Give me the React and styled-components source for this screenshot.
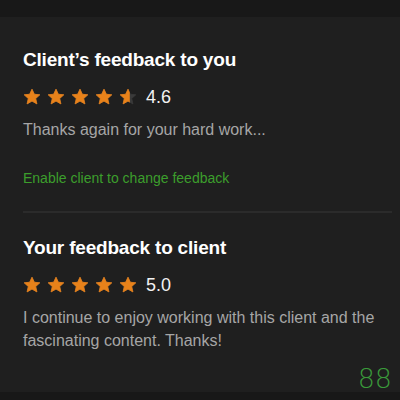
import React from 'react';
import styled, { createGlobalStyle } from 'styled-components';

const GlobalStyle = createGlobalStyle`
  html, body {
    margin: 0;
    padding: 0;
    background: #181818;
  }
  body {
    font-family: "Liberation Sans", Arial, sans-serif;
    -webkit-font-smoothing: antialiased;
  }
`;

const Page = styled.div`
  width: 400px;
  height: 400px;
  overflow: hidden;
  background: #181818;
  display: flex;
  flex-direction: column;
`;

const Panel = styled.div`
  margin-top: 17px;
  height: 375px;
  background: #1f1f1f;
  padding: 30px 0 0 23px;
  box-sizing: border-box;
  position: relative;
`;

const Section = styled.section`
  padding-right: 20px;
`;

const Title = styled.h2`
  margin: 0;
  color: #ffffff;
  font-size: 19px;
  font-weight: 700;
  line-height: 26px;
  letter-spacing: -0.2px;
`;

const RatingRow = styled.div`
  display: flex;
  align-items: center;
  margin-top: 12px;
  height: 24px;
`;

const Stars = styled.div`
  display: flex;
  gap: 6px;
`;

const Score = styled.span`
  margin-left: 9px;
  color: #f2f2f2;
  font-size: 18px;
  line-height: 24px;
`;

const Comment = styled.p`
  margin: 9px 0 0;
  color: #a6a6a6;
  font-size: 16px;
  line-height: 23px;
  max-width: 365px;
`;

const ActionLink = styled.a`
  display: block;
  margin-top: 28px;
  color: #3c9e2c;
  font-size: 14px;
  line-height: 18px;
  text-decoration: none;
  cursor: pointer;
`;

const Divider = styled.hr`
  border: 0;
  height: 2px;
  background: #2b2b2b;
  margin: 24px 8px 22px 0;
`;

const Counter = styled.span`
  position: absolute;
  right: 8px;
  bottom: -2px;
  color: #3a9a3a;
  font-family: "DejaVu Sans", sans-serif;
  font-weight: 300;
  font-size: 27px;
  line-height: 30px;
`;

const STAR = 'M9 1.2l2.35 5.05 5.45.55-4.1 3.7 1.2 5.4L9 13.1l-4.9 2.8 1.2-5.4-4.1-3.7 5.45-.55z';

function Star({ fill = 1, id }) {
  return (
    <svg width="18" height="18" viewBox="0 0 18 18">
      <defs>
        <clipPath id={id}>
          <rect x="0" y="0" width={18 * fill} height="18" />
        </clipPath>
      </defs>
      <path d={STAR} fill="#3a3a3a" stroke="#3a3a3a" strokeWidth="0.8" strokeLinejoin="round" />
      <path d={STAR} fill="#e8821a" stroke="#e8821a" strokeWidth="0.8" strokeLinejoin="round" clipPath={`url(#${id})`} />
    </svg>
  );
}

function Rating({ value, name }) {
  return (
    <RatingRow>
      <Stars>
        {[0, 1, 2, 3, 4].map(i => (
          <Star key={i} id={`${name}-${i}`} fill={Math.max(0, Math.min(1, value - i))} />
        ))}
      </Stars>
      <Score>{value.toFixed(1)}</Score>
    </RatingRow>
  );
}

export default function App() {
  return (
    <Page>
      <GlobalStyle />
      <Panel>
        <Section>
          <Title>Client’s feedback to you</Title>
          <Rating value={4.6} name="client" />
          <Comment>Thanks again for your hard work...</Comment>
          <ActionLink>Enable client to change feedback</ActionLink>
        </Section>
        <Divider />
        <Section>
          <Title>Your feedback to client</Title>
          <Rating value={5.0} name="own" />
          <Comment>I continue to enjoy working with this client and the fascinating content. Thanks!</Comment>
        </Section>
        <Counter>88</Counter>
      </Panel>
    </Page>
  );
}
